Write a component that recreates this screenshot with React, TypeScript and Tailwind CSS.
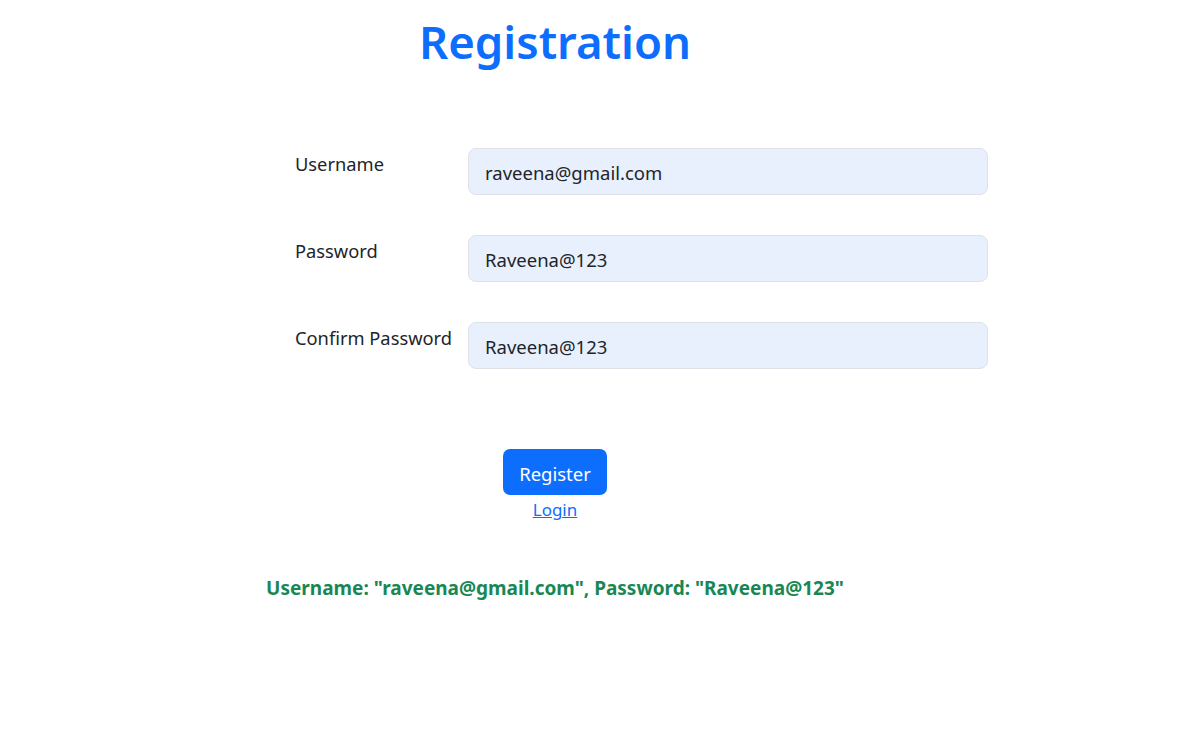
import React from "react";

const font = { fontFamily: '"Noto Sans", "Open Sans", sans-serif' };

function Row({ label, value }: { label: string; value: string }) {
  return (
    <div className="flex items-start ml-[295px] h-[47px]">
      <label className="w-[173px] pt-[3px] text-[18.3px] leading-[26px] text-[#212529]">{label}</label>
      <div className="w-[520px] h-[47px] rounded-[8px] border border-[#dee2e6] bg-[#e8f0fe] px-4 pt-[2px] flex items-center text-[18.5px] text-[#212529]">
        {value}
      </div>
    </div>
  );
}

export default function App() {
  return (
    <div className="w-[1186px] h-[752px] bg-white" style={font}>
      <div className="w-[1110px] pt-[10px] text-center">
        <h1 className="text-[45.5px] leading-[62px] font-semibold text-[#0d6efd]">Registration</h1>
      </div>
      <div className="mt-[76px] flex flex-col gap-[40px]">
        <Row label="Username" value="raveena@gmail.com" />
        <Row label="Password" value="Raveena@123" />
        <Row label="Confirm Password" value="Raveena@123" />
      </div>
      <div className="w-[1110px] mt-[80px] flex flex-col items-center">
        <button className="w-[104px] h-[46px] rounded-[7px] bg-[#0d6efd] text-white text-[18.5px] pt-[3px] leading-[43px]">Register</button>
        <a href="#" className="mt-[2px] text-[17px] leading-[26px] text-[#0d6efd] underline">Login</a>
        <p className="mt-[51px] text-[19px] font-bold text-[#198754]">
          Username: "raveena@gmail.com", Password: "Raveena@123"
        </p>
      </div>
    </div>
  );
}
